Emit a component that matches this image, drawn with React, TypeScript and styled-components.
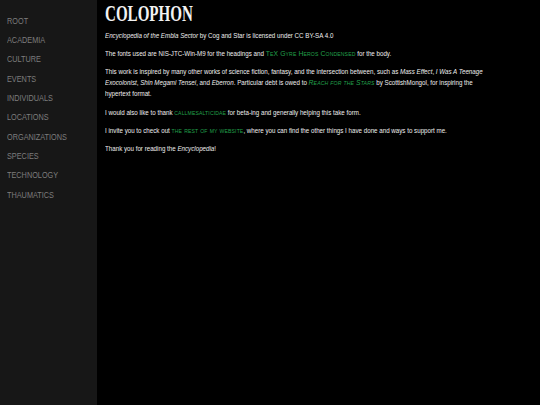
import React, { FunctionComponent } from "react";
import styled, { createGlobalStyle } from "styled-components";

const GlobalStyle = createGlobalStyle`
  html, body {
    margin: 0;
    padding: 0;
    background: #000;
    height: 100%;
  }
  #root {
    height: 100%;
  }
`;

const COLORS = {
  SIDEBAR: "#171717",
  SIDEBAR_TEXT: "#7d7d7d",
  TEXT: "#efefef",
  LINK: "#22a04c",
};

// condensed body face isn't installed, so the narrow look comes from a horizontal squeeze
const BODY_FONT = `"Liberation Sans", Arial, sans-serif`;
const SQUEEZE = 0.85;

const StyledPage = styled.div`
  display: flex;
  height: 405px;
  width: 540px;
  overflow: hidden;
`;

const StyledSidebar = styled.nav`
  background: ${COLORS.SIDEBAR};
  display: flex;
  flex-direction: column;
  flex: 0 0 97px;
  gap: 9.05px;
  padding: 15.5px 0 0 7px;
  box-sizing: border-box;
`;

const StyledNavLink = styled.a`
  color: ${COLORS.SIDEBAR_TEXT};
  font-family: ${BODY_FONT};
  font-size: 8.6px;
  line-height: 10.3px;
  text-decoration: none;
  text-transform: uppercase;
  transform: scaleX(${SQUEEZE});
  transform-origin: left center;
  white-space: nowrap;
`;

const StyledMain = styled.main`
  flex: 1;
  padding: 0 0 0 8px;
  color: ${COLORS.TEXT};
`;

const StyledHeading = styled.h1`
  font-family: "Liberation Serif", "Times New Roman", serif;
  font-weight: bold;
  font-size: 23px;
  line-height: 26px;
  margin: 1px 0 3px;
  transform: scaleX(0.655);
  transform-origin: left center;
  color: #f2f2f2;
  white-space: nowrap;
`;

const StyledText = styled.div`
  font-family: ${BODY_FONT};
  font-size: 7.3px;
  line-height: 11px;
  width: ${Math.round(380 / SQUEEZE)}px;
  transform: scaleX(${SQUEEZE});
  transform-origin: left top;
`;

const StyledParagraph = styled.p`
  margin: 0 0 7.2px;
`;

const StyledLink = styled.a`
  color: ${COLORS.LINK};
  font-variant: small-caps;
  font-size: 1.1em;
  letter-spacing: 0.15px;
  line-height: 0;
  text-decoration: none;
`;

const NAV_ITEMS = [
  "Root",
  "Academia",
  "Culture",
  "Events",
  "Individuals",
  "Locations",
  "Organizations",
  "Species",
  "Technology",
  "Thaumatics",
];

const App: FunctionComponent = () => {
  return (
    <>
      <GlobalStyle />
      <StyledPage>
        <StyledSidebar>
          {NAV_ITEMS.map((item) => (
            <StyledNavLink key={item} href="#">
              {item}
            </StyledNavLink>
          ))}
        </StyledSidebar>

        <StyledMain>
          <StyledHeading>COLOPHON</StyledHeading>

          <StyledText>
            <StyledParagraph>
              <i>Encyclopedia of the Embla Sector</i> by Cog and Star is licensed under CC BY-SA 4.0
            </StyledParagraph>

            <StyledParagraph>
              The fonts used are NIS-JTC-Win-M9 for the headings and{" "}
              <StyledLink href="#">TeX Gyre Heros Condensed</StyledLink> for the body.
            </StyledParagraph>

            <StyledParagraph>
              This work is inspired by many other works of science fiction, fantasy, and the intersection between, such as{" "}
              <i>Mass Effect</i>, <i>I Was A Teenage Exocolonist</i>, <i>Shin Megami Tensei</i>, and <i>Eberron</i>.
              Particular debt is owed to{" "}
              <i>
                <StyledLink href="#">Reach for the Stars</StyledLink>
              </i>{" "}
              by ScottishMongol, for inspiring the hypertext format.
            </StyledParagraph>

            <StyledParagraph>
              I would also like to thank <StyledLink href="#">callmesalticidae</StyledLink> for beta-ing and generally
              helping this take form.
            </StyledParagraph>

            <StyledParagraph>
              I invite you to check out <StyledLink href="#">the rest of my website</StyledLink>, where you can find the
              other things I have done and ways to support me.
            </StyledParagraph>

            <StyledParagraph>
              Thank you for reading the <i>Encyclopedia</i>!
            </StyledParagraph>
          </StyledText>
        </StyledMain>
      </StyledPage>
    </>
  );
};

export default App;
